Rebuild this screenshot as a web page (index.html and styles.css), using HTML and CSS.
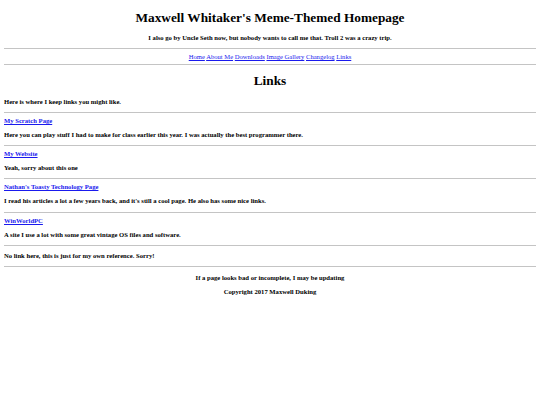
FILE: index.html
```html
<!DOCTYPE html>
<html>
<head>
<meta charset="utf-8">
<title>Links</title>
<link rel="stylesheet" href="styles.css">
</head>
<body>
<h1 class="title top">Maxwell Whitaker's Meme-Themed Homepage</h1>
<p class="txt center">I also go by Uncle Seth now, but nobody wants to call me that. Troll 2 was a crazy trip.</p>
<hr>
<div class="nav"><a href="#">Home</a> <a href="#">About Me</a> <a href="#">Downloads</a> <a href="#">Image Gallery</a> <a href="#">Changelog</a> <a href="#">Links</a></div>
<hr>
<h1 class="title sub">Links</h1>
<p class="txt">Here is where I keep links you might like.</p>
<hr>
<div class="link"><a href="#">My Scratch Page</a></div>
<p class="txt">Here you can play stuff I had to make for class earlier this year. I was actually the best programmer there.</p>
<hr>
<div class="link"><a href="#">My Website</a></div>
<p class="txt">Yeah, sorry about this one</p>
<hr>
<div class="link"><a href="#">Nathan's Toasty Technology Page</a></div>
<p class="txt">I read his articles a lot a few years back, and it's still a cool page. He also has some nice links.</p>
<hr>
<div class="link"><a href="#">WinWorldPC</a></div>
<p class="txt">A site I use a lot with some great vintage OS files and software.</p>
<hr>
<p class="txt">No link here, this is just for my own reference. Sorry!</p>
<hr>
<p class="txt center">If a page looks bad or incomplete, I may be updating</p>
<p class="txt center">Copyright 2017 Maxwell Duking</p>
</body>
</html>
```
FILE: styles.css
```css
html { background: #fff; }
body {
  margin: 4px;
  font-family: "Liberation Serif", "Times New Roman", serif;
  font-size: 8px;
  color: #000;
}
h1 {
  font-size: 13.3px;
  line-height: 15px;
  margin: 8.9px 0;
}
h1.top { margin-top: 6px; }
h1.sub { margin-top: 8px; margin-bottom: 9.9px; }
.title { text-align: center; }
.txt {
  font-size: 6.64px;
  line-height: 7.6px;
  font-weight: bold;
  margin: 6.5px 0;
}
.link {
  font-size: 6.64px;
  line-height: 7.6px;
  font-weight: bold;
}
.center { text-align: center; }
hr {
  margin: 4px 0;
  border: none;
  border-top: 1px solid #c4c4c4;
  height: 0;
}
.nav {
  text-align: center;
  font-size: 6.6px;
  line-height: 7px;
}
a { color: #1a1aee; }
```
